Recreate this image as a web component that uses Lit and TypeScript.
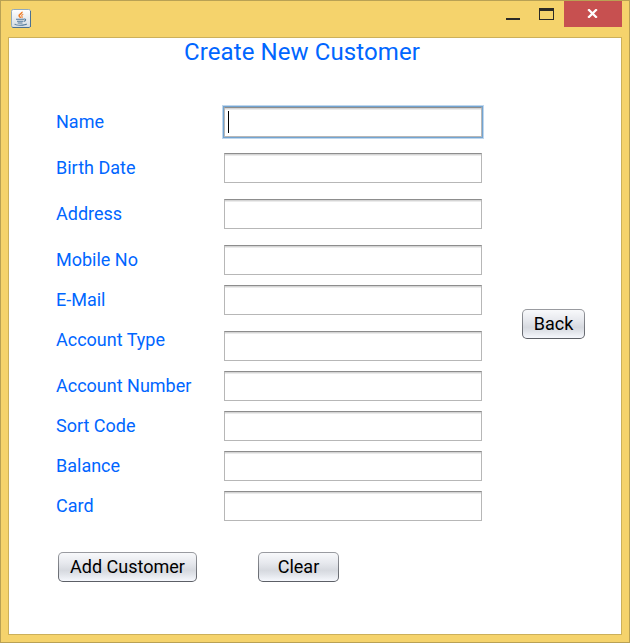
import { LitElement, html, css } from "lit";
import { customElement, property } from "lit/decorators.js";
import { classMap } from "lit/directives/class-map.js";

interface Field {
  label: string;
  tight?: boolean;
  raised?: boolean;
  focused?: boolean;
}

const FIELDS: Field[] = [
  { label: "Name", focused: true },
  { label: "Birth Date" },
  { label: "Address" },
  { label: "Mobile No" },
  { label: "E-Mail", tight: true },
  { label: "Account Type", raised: true },
  { label: "Account Number", tight: true },
  { label: "Sort Code", tight: true },
  { label: "Balance", tight: true },
  { label: "Card", tight: true },
];

@customElement("nimbus-button")
export class NimbusButton extends LitElement {
  @property() label = "";

  static styles = css`
    :host { display: block; height: 30px; }
    .button {
      display: block;
      box-sizing: border-box;
      width: 100%;
      height: 30px;
      margin: 0;
      padding: 0;
      border: 1px solid transparent;
      border-radius: 5px;
      background:
        linear-gradient(#f8f9fb 0%, #e7e9ee 35%, #d6d9df 62%, #dfe2e8 75%, #f6f8fd 100%) padding-box,
        linear-gradient(#9a9ca1, #5b5e65) border-box;
      color: #000;
      font: 18px/28px Roboto, sans-serif;
      text-align: center;
      white-space: nowrap;
    }
  `;

  render() {
    return html`<button class="button">${this.label}</button>`;
  }
}

@customElement("title-bar")
export class TitleBar extends LitElement {
  static styles = css`
    :host { display: flex; height: 36px; align-items: flex-start; }
    .logo { margin: 8px 0 0 10px; width: 20px; height: 19px; display: block; }
    .controls { display: flex; margin-left: auto; margin-right: 7px; align-items: flex-start; }
    .min { width: 14px; height: 2px; background: #2b2a26; margin: 17px 19px 0 0; }
    .max {
      box-sizing: border-box; width: 15px; height: 12px; margin: 7px 10px 0 0;
      border: 1px solid #2b2a26; border-top-width: 3px;
    }
    .close {
      box-sizing: border-box; width: 58px; height: 26px; padding: 8px 0 0 23px; background: #c75050;
    }
    .cross { display: block; width: 11px; height: 9px; }
  `;

  render() {
    return html`
      <svg class="logo" viewBox="0 0 20 19">
        <defs>
          <linearGradient id="tile" x1="0" y1="0" x2="0" y2="1">
            <stop offset="0" stop-color="#ffffff" />
            <stop offset="1" stop-color="#d3dbe2" />
          </linearGradient>
        </defs>
        <rect x=".5" y=".5" width="19" height="18" rx="1.8" fill="url(#tile)" stroke="#8fa9be" />
        <path d="M1.5 18.5h17M19.5 2v16" stroke="#4c7191" fill="none" />
        <path d="M11 2.8c.6 1.7-3 2.4-2.9 3.9.1 1 1.4 1.2 1.3 2.3" fill="none" stroke="#ef7f2c" stroke-width="1.6" />
        <path d="M12.3 5.3c-1.6.5-2 1.3-1.3 2 .5.6.2 1.1-.3 1.7" fill="none" stroke="#f28d45" stroke-width="1.2" />
        <path d="M5 10.2h8M6 12.2h6.2M6.7 14h4.8" stroke="#52799a" stroke-width="1.1" fill="none" />
        <path d="M13 10c2.3-.4 2.1 2-.3 2.4M3.7 14.9c.8 1.8 10.5 1.7 12 0" fill="none" stroke="#52799a" stroke-width="1.1" />
      </svg>
      <div class="controls">
        <div class="min"></div>
        <div class="max"></div>
        <div class="close">
          <svg class="cross" viewBox="0 0 11 9">
            <path d="M1.2.3 9.8 8.7M9.8.3 1.2 8.7" stroke="#fff" stroke-width="2.3" />
          </svg>
        </div>
      </div>
    `;
  }
}

@customElement("app-root")
export class AppRoot extends LitElement {
  static styles = css`
    :host { display: block; font-family: Roboto, sans-serif; }
    .window {
      box-sizing: border-box; width: 630px; height: 643px;
      display: flex; flex-direction: column;
      background: #f5d36c; border: 1px solid #b9a154;
    }
    .client {
      box-sizing: border-box; flex: 1; margin: 0 7px 7px 7px;
      background: #fff; border: 1px solid #ccb05a; overflow: hidden;
    }
    .title {
      margin: 0; padding-left: 175px; height: 28px;
      font-size: 24px; font-weight: 400; line-height: 28px; letter-spacing: 0.1px;
      color: #0066ff; white-space: nowrap;
    }
    .content { display: flex; align-items: flex-start; padding: 41px 0 0 47px; }
    .fields { width: 426px; }
    .row { display: grid; grid-template-columns: 168px 258px; margin-top: 16px; }
    .row:first-child { margin-top: 0; }
    .row.tight { margin-top: 10px; }
    .label { color: #0066ff; font-size: 18px; line-height: 30px; height: 30px; white-space: nowrap; }
    .raised .label { margin-top: -6px; }
    .input {
      box-sizing: border-box; height: 30px; background: #fff;
      border: 1px solid #b7b7b7; border-top-color: #8d8d8d;
      box-shadow: inset 0 1px #d5d5d5, inset 0 2px #ebebeb;
    }
    .focused .input {
      padding: 3px 0 0 3px;
      box-shadow: inset 0 1px #d5d5d5, inset 0 2px #ebebeb, 0 0 0 1px #73a4d1, 0 0 0 2px #c0d7ed;
    }
    .caret { width: 1px; height: 22px; background: #000; }
    .back { width: 63px; margin: 202px 0 0 40px; }
    .actions { display: flex; gap: 61px; padding: 31px 0 0 49px; }
    .add { width: 139px; }
    .clear { width: 81px; }
  `;

  render() {
    return html`
      <div class="window">
        <title-bar></title-bar>
        <main class="client">
          <h1 class="title">Create New Customer</h1>
          <div class="content">
            <div class="fields">
              ${FIELDS.map(
                (f) => html`
                  <div class=${classMap({ row: true, tight: !!f.tight, raised: !!f.raised, focused: !!f.focused })}>
                    <div class="label">${f.label}</div>
                    <div class="input">${f.focused ? html`<div class="caret"></div>` : null}</div>
                  </div>
                `
              )}
            </div>
            <nimbus-button class="back" label="Back"></nimbus-button>
          </div>
          <div class="actions">
            <nimbus-button class="add" label="Add Customer"></nimbus-button>
            <nimbus-button class="clear" label="Clear"></nimbus-button>
          </div>
        </main>
      </div>
    `;
  }
}
